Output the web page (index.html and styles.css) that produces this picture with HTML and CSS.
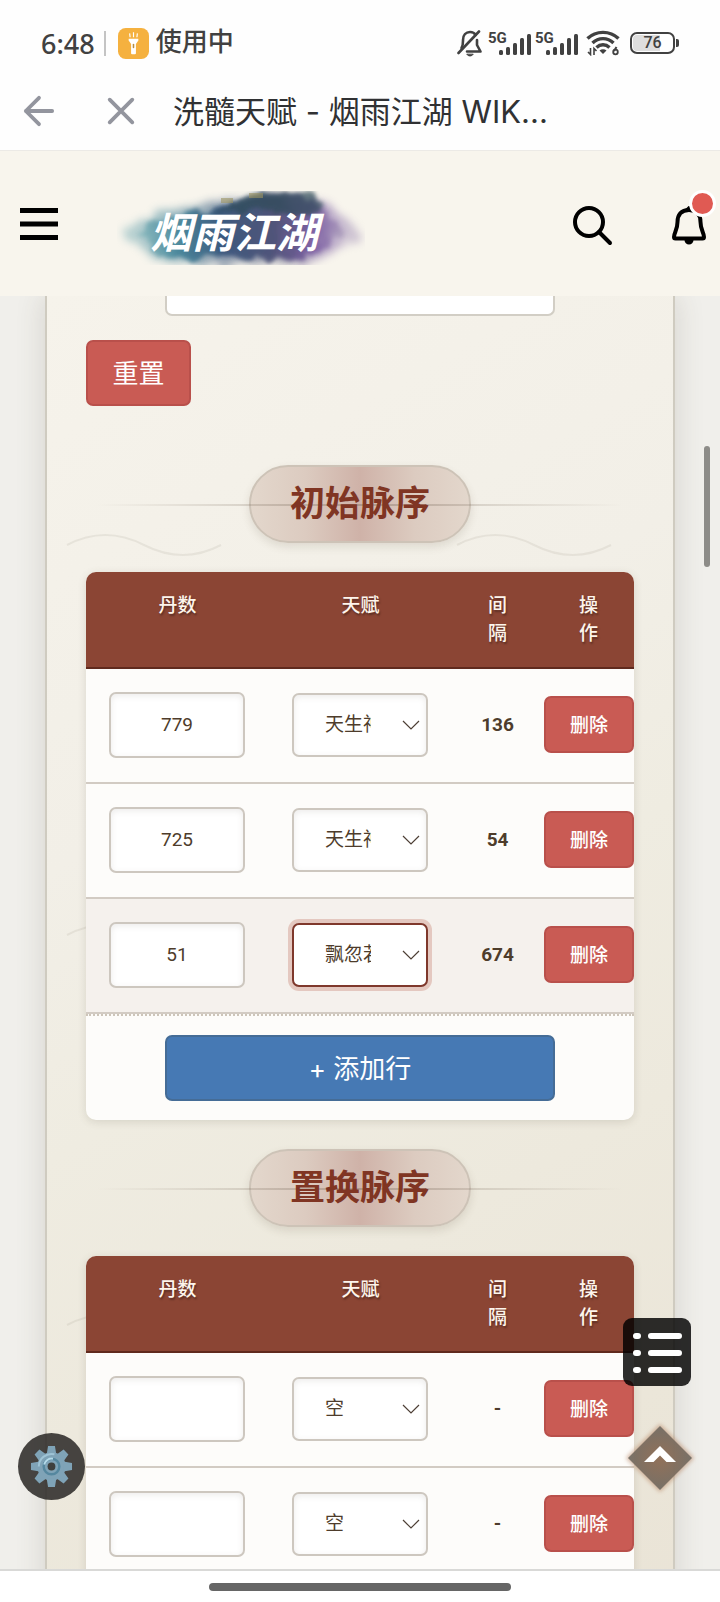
FILE: index.html
```html
<!DOCTYPE html>
<html lang="zh-CN">
<head>
<meta charset="utf-8">
<meta name="viewport" content="width=device-width, initial-scale=1">
<title>洗髓天赋 - 烟雨江湖WIKI</title>
<link rel="stylesheet" href="styles.css">
</head>
<body>
<div class="status">
  <span class="clock">6:48</span>
  <span class="divider"></span>
  <svg class="torch" viewBox="0 0 32 32" aria-hidden="true"><rect width="32" height="32" rx="8" fill="#f5b13f"/><path d="M11 11h10v2l-2.500 3.500V26a1 1 0 0 1-1 1h-3a1 1 0 0 1-1-1v-9.500L11 13z" fill="#fff"/><path d="M12 5.500l.5 4M16 4.500v5M20 5.500l-.5 4" stroke="#fff" stroke-width="1.200"/><path d="M16 17v3" stroke="#b98d3d" stroke-width="1.600" stroke-linecap="round"/></svg>
  <span class="using">使用中</span>
  <span class="status-icons">
    <svg class="mute" viewBox="0 0 26 28" fill="none" stroke="#414141" stroke-width="2.600" stroke-linecap="round" stroke-linejoin="round" aria-hidden="true"><path d="M4.500 19C6.200 16.500 6 14 6 11c0-5 3-8 7-8 2.500 0 4.500 1 5.700 3M20 11v5l3.500 6.500H10"/><path d="M22 2.500L1.500 24"/><path d="M10 25.500c1.500 2 4.500 2 6 0z" fill="#414141" stroke-width="1"/></svg>
    <span class="cell"><span class="net">5G</span><svg class="bars" viewBox="0 0 32 21" fill="#414141" aria-hidden="true"><rect x="0" y="16" width="4" height="5" rx="1.500"/><rect x="7" y="13" width="4" height="8" rx="1.500"/><rect x="14" y="9" width="4" height="12" rx="1.500"/><rect x="21" y="4" width="4" height="17" rx="1.500"/><rect x="28" y="0" width="4" height="21" rx="1.500"/></svg></span>
    <span class="cell"><span class="net">5G</span><svg class="bars" viewBox="0 0 32 21" fill="#414141" aria-hidden="true"><rect x="0" y="16" width="4" height="5" rx="1.500"/><rect x="7" y="13" width="4" height="8" rx="1.500"/><rect x="14" y="9" width="4" height="12" rx="1.500"/><rect x="21" y="4" width="4" height="17" rx="1.500"/><rect x="28" y="0" width="4" height="21" rx="1.500"/></svg></span>
    <svg class="wifi" viewBox="0 0 34 26" fill="none" stroke="#414141" stroke-width="3.400" aria-hidden="true"><path d="M1.500 8.500C10 .3 24 .3 32.500 8.500M6.500 13C12.500 7.200 21.500 7.200 27.500 13M10.500 17.500c3.800-3.600 9.200-3.600 13 0"/><path d="M13.500 20.500c2-1.800 5-1.800 7 0L17 24z" fill="#414141" stroke="none"/><path d="M4.500 18v6.500L2 22M8 25v-6.500l2.500 2.500" stroke-width="1.600"/><path d="M30.500 17l-2.500 4" stroke-width="2"/><circle cx="29.500" cy="22" r="2.300" stroke-width="1.800"/></svg>
    <span class="battery"><span class="battery-level">76</span></span>
  </span>
</div>
<div class="appbar">
  <button class="app-btn back" aria-label="返回"><svg viewBox="0 0 34 34" fill="none" stroke="#93959e" stroke-width="4" stroke-linecap="round" stroke-linejoin="round"><path d="M17 3L3 17l14 14M3 17h28"/></svg></button>
  <button class="app-btn" aria-label="关闭"><svg viewBox="0 0 34 34" fill="none" stroke="#93959e" stroke-width="4" stroke-linecap="round"><path d="M5 5l24 24M29 5L5 29"/></svg></button>
  <h1 class="app-title">洗髓天赋 - 烟雨江湖 WIK...</h1>
</div>
<header class="site-header">
  <button class="icon-btn menu" aria-label="菜单"><svg viewBox="0 0 38 32" fill="#000"><path d="M0 0h38v5H0zM0 13.500h38v5H0zM0 27h38v5H0z"/></svg></button>
  <a class="logo" href="#" aria-label="烟雨江湖">
    <svg viewBox="0 0 248 74">
      <defs>
        <linearGradient id="ink" x1="0" x2="1"><stop offset="0" stop-color="#86b8bd"/><stop offset=".2" stop-color="#3b7f95"/><stop offset=".4" stop-color="#2b4c74"/><stop offset=".65" stop-color="#40446e"/><stop offset=".85" stop-color="#7656a0"/><stop offset="1" stop-color="#b4a8c0"/></linearGradient>
        <filter id="soft" x="-20%" y="-30%" width="140%" height="160%"><feTurbulence type="fractalNoise" baseFrequency=".07" numOctaves="4" seed="5" result="n"/><feDisplacementMap in="SourceGraphic" in2="n" scale="16" xChannelSelector="R" yChannelSelector="G"/><feGaussianBlur stdDeviation="2"/></filter>
        <filter id="haze" x="-20%" y="-30%" width="140%" height="160%"><feTurbulence type="fractalNoise" baseFrequency=".06" numOctaves="3" seed="8" result="n"/><feDisplacementMap in="SourceGraphic" in2="n" scale="18" xChannelSelector="R" yChannelSelector="G"/><feGaussianBlur stdDeviation="4"/></filter>
      </defs>
      <path d="M4 42C28 22 72 14 112 8l40-6 50 4 26 20 18 16-26 16-30 14-70-1-68 2-30-14z" fill="url(#ink)" opacity=".5" filter="url(#haze)"/>
      <path d="M22 42C44 26 82 20 106 15l36-10 50 1 18 18 18 18-20 16-26 12-64-3-60 1-28-12z" fill="url(#ink)" opacity=".82" filter="url(#soft)"/>
      <path d="M112 13l26-10 56-1 14 14-10 8-40-4-60 2z" fill="#2d4b58" opacity=".7" filter="url(#soft)"/>
      <path d="M104 7h12v5h-12zM132 2h14v5h-14z" fill="#9d9563" opacity=".6"/>
      <text class="logo-text" x="33" y="57">烟雨江湖</text>
    </svg>
  </a>
  <button class="icon-btn search" aria-label="搜索"><svg viewBox="0 0 40 40" fill="none" stroke="#000" stroke-width="4" stroke-linecap="round"><circle cx="16" cy="16" r="14"/><path d="M26 26l11 11"/></svg></button>
  <button class="icon-btn bell" aria-label="通知"><svg viewBox="0 0 34 40" fill="none" stroke="#000" stroke-width="4" stroke-linejoin="round"><path d="M17 4C9 4 5.500 9 5.500 16c0 8-3.500 11-3.500 15 0 1 .5 1.500 1.500 1.500h27c1 0 1.500-.5 1.500-1.500 0-4-3.500-7-3.500-15C28.500 9 25 4 17 4z"/><path d="M14 4l3-3 3 3z" fill="#000" stroke-width="2"/><path d="M12.500 34h9a4.500 4.500 0 0 1-9 0z" fill="#000" stroke="none"/></svg><span class="dot"></span></button>
</header>
<div class="viewport">
  <main class="panel">
    <input class="cut-field" type="text" aria-label="名称">
    <button class="btn btn-red reset">重置</button>
    <h2 class="section"><span class="pill"><span class="pill-text">初始脉序</span></span></h2>
    <div class="card">
      <table class="grid">
        <colgroup><col class="wide"><col class="wide"><col class="narrow"><col class="narrow"></colgroup>
        <thead><tr><th>丹数</th><th>天赋</th><th>间<br>隔</th><th>操<br>作</th></tr></thead>
        <tbody>
          <tr><td><input class="num" type="text" value="779" aria-label="丹数 1"></td><td><select class="talent" aria-label="天赋 1"><option>天生神力</option></select></td><td class="gap">136</td><td class="action"><button class="btn btn-red del">删除</button></td></tr>
          <tr><td><input class="num" type="text" value="725" aria-label="丹数 2"></td><td><select class="talent" aria-label="天赋 2"><option>天生神力</option></select></td><td class="gap">54</td><td class="action"><button class="btn btn-red del">删除</button></td></tr>
          <tr class="active"><td><input class="num" type="text" value="51" aria-label="丹数 3"></td><td><select class="talent focused" aria-label="天赋 3"><option>飘忽若神</option></select></td><td class="gap">674</td><td class="action"><button class="btn btn-red del">删除</button></td></tr>
        </tbody>
        <tfoot><tr><td colspan="4"><button class="btn add">+ 添加行</button></td></tr></tfoot>
      </table>
    </div>
    <h2 class="section second"><span class="pill"><span class="pill-text">置换脉序</span></span></h2>
    <div class="card">
      <table class="grid">
        <colgroup><col class="wide"><col class="wide"><col class="narrow"><col class="narrow"></colgroup>
        <thead><tr><th>丹数</th><th>天赋</th><th>间<br>隔</th><th>操<br>作</th></tr></thead>
        <tbody>
          <tr><td><input class="num" type="text" aria-label="置换丹数 1"></td><td><select class="talent" aria-label="置换天赋 1"><option>空</option></select></td><td class="gap">-</td><td class="action"><button class="btn btn-red del">删除</button></td></tr>
          <tr><td><input class="num" type="text" aria-label="置换丹数 2"></td><td><select class="talent" aria-label="置换天赋 2"><option>空</option></select></td><td class="gap">-</td><td class="action"><button class="btn btn-red del">删除</button></td></tr>
        </tbody>
      </table>
    </div>
  </main>
  <span class="scroll-thumb"></span>
  <button class="float toc" aria-label="目录"><svg viewBox="0 0 68 68" stroke="#fff" stroke-width="6" stroke-linecap="round"><path d="M13 18h2M13 35h2M13 52h2M28 18h28M28 35h28M28 52h28"/></svg></button>
  <button class="float top" aria-label="回到顶部"><svg viewBox="0 0 76 76"><defs><radialGradient id="glow"><stop offset="0" stop-color="#8d6c54"/><stop offset="1" stop-color="#706b63"/></radialGradient><filter id="blur"><feGaussianBlur stdDeviation="2"/></filter></defs><path d="M38 4l34 34-34 34L4 38z" fill="#b98b6c" opacity=".65" filter="url(#blur)"/><path d="M38 6l32 32-32 32L6 38z" fill="url(#glow)" opacity=".92"/><path d="M38 26l16 16H44.500L38 35.500 31.500 42H22z" fill="#fff"/></svg></button>
  <button class="float gear" aria-label="设置"><svg viewBox="0 0 44 44"><g fill="#7fa3b7"><circle cx="22" cy="22" r="14.500"/><g id="teeth"><path id="t" d="M18.500 1h7l1.500 9h-10zM18.500 43h7l1.500-9h-10z"/><use href="#t" transform="rotate(45 22 22)"/><use href="#t" transform="rotate(90 22 22)"/><use href="#t" transform="rotate(135 22 22)"/></g></g><path d="M9 22a13 13 0 0 1 16-12.500" fill="none" stroke="#9fc4d6" stroke-width="2"/><circle cx="22" cy="22" r="8" fill="none" stroke="#55879f" stroke-width="2.500"/><path d="M14.500 20a8 8 0 0 1 9-6" fill="none" stroke="#b5dae9" stroke-width="2"/><circle cx="22" cy="22" r="4" fill="#3f403e"/></svg></button>
</div>
<footer class="navbar"><span class="home"></span></footer>
</body>
</html>
```

FILE: styles.css
```css
* { box-sizing: border-box; }
body {
  margin: 0;
  height: 100vh;
  display: flex;
  flex-direction: column;
  overflow: hidden;
  background: #fefefe;
  color: #4e3c2b;
  font-family: Roboto, "Noto Sans CJK SC", sans-serif;
}
button, input, select { font: inherit; color: inherit; margin: 0; }
button { border: 0; padding: 0; background: none; }
svg { display: block; }

.status {
  display: flex;
  align-items: center;
  height: 86px;
  flex: none;
  padding: 0 45px 0 41px;
  color: #414141;
  font-size: 26px;
  font-weight: 500;
}
.clock { font-family: "Noto Sans", sans-serif; font-size: 27px; }
.divider { width: 2px; height: 25px; margin: 0 12px 0 9px; background: #c4c4c4; }
.torch { width: 31px; height: 31px; margin-right: 7px; }
.using { line-height: 32px; padding-bottom: 3px; }
.status-icons { display: flex; align-items: center; margin-left: auto; }
.mute { width: 26px; height: 28px; margin-right: 5px; }
.cell { display: flex; align-items: flex-end; margin-right: 4px; height: 24px; }
.net {
  align-self: flex-start;
  width: 20px;
  margin-right: -9px;
  font: 700 15px/14px Roboto, sans-serif;
}
.bars { width: 32px; height: 21px; }
.wifi { width: 34px; height: 26px; margin: 0 10px 0 4px; }
.battery {
  position: relative;
  width: 45px;
  height: 22px;
  padding: 1px;
  border: 2px solid #414141;
  border-radius: 7px;
}
.battery::after {
  content: "";
  position: absolute;
  right: -6px;
  top: 5px;
  width: 3px;
  height: 8px;
  border-radius: 0 2px 2px 0;
  background: #414141;
}
.battery-level {
  display: block;
  border-radius: 4px;
  background: linear-gradient(90deg, #dedede 70%, #fff 70%);
  font: 500 16px/16px Roboto, sans-serif;
  text-align: center;
}

.appbar {
  display: flex;
  align-items: center;
  height: 65px;
  flex: none;
  padding: 0 23px 14px;
  border-bottom: 1px solid #eceae6;
}
.app-btn { width: 32px; height: 32px; }
.app-btn svg { width: 32px; height: 32px; }
.back { margin-right: 50px; }
.app-title {
  margin: 0 0 0 36px;
  padding-top: 2px;
  color: #303133;
  font-family: Inter, "Noto Sans CJK SC", sans-serif;
  font-size: 31px;
  font-weight: 400;
  line-height: 40px;
  white-space: nowrap;
}

.site-header {
  display: flex;
  align-items: center;
  height: 145px;
  flex: none;
  padding: 0 14px 0 20px;
  background: #f8f5ed;
}
.menu { width: 38px; }
.logo { width: 248px; margin: 8px auto 0 59px; }
.logo-text {
  font: italic 700 42px "Noto Sans CJK SC", sans-serif;
  fill: #fff;
}
.search { width: 40px; margin: 4px 59px 0 0; }
.bell { position: relative; width: 34px; margin-top: 4px; }
.dot {
  position: absolute;
  top: -16px;
  right: -10px;
  width: 27px;
  height: 27px;
  border: 3px solid #fff;
  border-radius: 50%;
  background: #e05a53;
}

.viewport {
  position: relative;
  flex: 1;
  min-height: 0;
  overflow: hidden;
  padding: 0 45px;
  background: #f0efeb;
}
.panel {
  min-height: 1700px;
  padding: 0 39px;
  border: solid #cfcbc0;
  border-width: 0 2px;
  background:
    url("data:image/svg+xml,%3Csvg xmlns='http://www.w3.org/2000/svg' width='390' height='390'%3E%3Cpath d='M20 249Q58 229 97 249T174 249' fill='none' stroke='%238a8070' stroke-opacity='.13' stroke-width='2'/%3E%3C/svg%3E") 0 0,
    linear-gradient(150deg, #f6f3eb 0%, #f2efe7 28%, #efece1 42%, #ebe6d9 70%, #e8e0d2 100%);
  box-shadow: 0 0 28px rgba(70, 60, 50, .16);
}
.cut-field {
  display: block;
  width: 390px;
  max-width: 100%;
  height: 20px;
  margin: 0 auto 24px;
  border: 2px solid #d2cec5;
  border-top: 0;
  border-radius: 0 0 7px 7px;
  background: #fff;
}
.btn {
  padding-bottom: 3px;
  border: 2px solid #b9504b;
  border-radius: 7px;
  color: #fff;
  text-align: center;
}
.btn-red { background: #c95b54; }
.reset { display: block; width: 105px; height: 66px; font-size: 26px; }

.section {
  display: flex;
  justify-content: center;
  align-items: center;
  position: relative;
  margin: 59px 0 29px;
}
.section.second { margin-top: 29px; }
.section::after {
  content: "";
  position: absolute;
  left: 0;
  right: 0;
  top: 50%;
  height: 2px;
  background: linear-gradient(90deg, transparent 2%, rgba(125, 110, 95, .4) 50%, transparent 98%);
}
.pill {
  width: 222px;
  height: 78px;
  border: 2px solid #cdc3b7;
  border-radius: 39px;
  background: linear-gradient(90deg, #e3d7cc, #dccbc0 25%, #cfb2a8 50%, #dccbc0 75%, #e3d7cc);
  box-shadow: 0 4px 8px rgba(90, 80, 60, .14);
  color: #803523;
  font-size: 35px;
  font-weight: 700;
  line-height: 76px;
  text-align: center;
}
.pill-text { position: relative; z-index: 1; }

.card {
  overflow: hidden;
  border-radius: 10px;
  background: #fdfcfa;
  box-shadow: 0 2px 8px rgba(90, 80, 60, .16);
}
.grid {
  width: 100%;
  border-collapse: separate;
  border-spacing: 0;
  table-layout: fixed;
  font-size: 19px;
}
.wide { width: 33.4%; }
.narrow { width: 16.6%; }
.grid th {
  height: 97px;
  padding: 20px 0 0;
  border-bottom: 2px solid #602a1e;
  background: #8b4534;
  color: #fdf5ec;
  font-weight: 500;
  line-height: 28px;
  text-shadow: 1px 2px 2px rgba(0, 0, 0, .35);
  vertical-align: top;
}
.grid tbody td {
  height: 115px;
  padding: 0 24px 2px 23px;
  border-bottom: 2px solid #d2cbc3;
  vertical-align: middle;
}
.active td { background: #f5f1ed; }
.grid tbody .gap { padding: 0 0 2px; font-weight: 700; text-align: center; }
.grid tbody .action { padding: 0 0 2px 1px; }
.num, .talent {
  display: block;
  width: 100%;
  border: 2px solid #cdc7bf;
  border-radius: 7px;
  background-color: #fff;
  box-shadow: inset 0 2px 6px rgba(80, 70, 60, .1);
}
.num { height: 66px; padding: 0 8px; text-align: center; }
.talent {
  height: 64px;
  padding: 0 55px 0 31px;
  appearance: none;
  background-image: url("data:image/svg+xml,%3Csvg xmlns='http://www.w3.org/2000/svg' width='18' height='10' fill='none' stroke='%234e4036' stroke-width='1.200'%3E%3Cpath d='M1 1l8 8 8-8'/%3E%3C/svg%3E");
  background-repeat: no-repeat;
  background-position: right 6px center;
}
.focused { border-color: #7f382c; box-shadow: 0 0 0 4px #e4c8c0; }
.del { display: block; width: 100%; height: 57px; font-size: 19px; font-weight: 500; }
.grid tfoot td { padding: 19px 79px; border-top: 2px dotted #cdc5b9; }
.add {
  display: block;
  width: 100%;
  height: 66px;
  border-color: #456c96;
  background: #4679b4;
  font-family: Inter, "Noto Sans CJK SC", sans-serif;
  font-size: 26px;
}

.scroll-thumb {
  position: absolute;
  top: 150px;
  right: 10px;
  width: 6px;
  height: 121px;
  border-radius: 3px;
  background: #8d8c88;
}
.float { position: absolute; }
.toc {
  right: 29px;
  bottom: 183px;
  width: 68px;
  height: 68px;
  border-radius: 9px;
  background: rgba(0, 0, 0, .82);
}
.top { right: 22px; bottom: 73px; width: 76px; height: 76px; }
.gear {
  left: 18px;
  bottom: 69px;
  width: 67px;
  height: 67px;
  padding: 12px;
  border-radius: 50%;
  background: rgba(45, 43, 40, .87);
}

.navbar {
  display: flex;
  justify-content: center;
  align-items: center;
  height: 33px;
  flex: none;
  border-top: 2px solid #d9d9d7;
  background: #fff;
}
.home { width: 302px; max-width: 42%; height: 8px; border-radius: 4px; background: #666; }
```
